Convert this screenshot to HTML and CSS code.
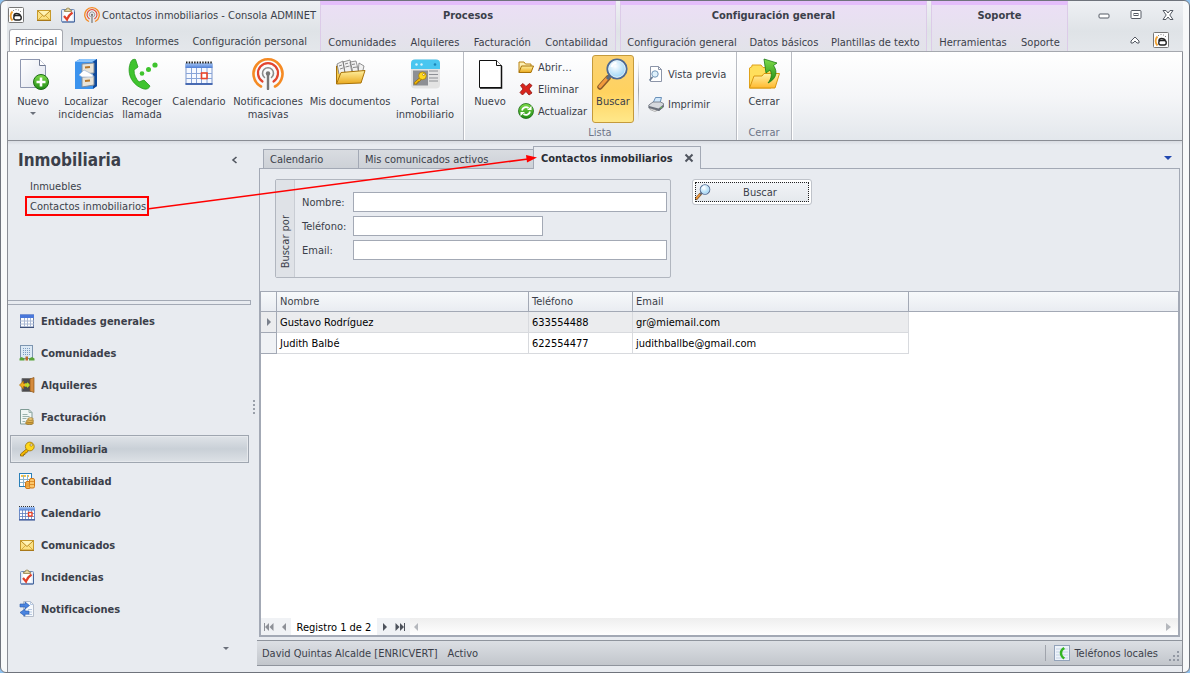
FILE: index.html
```html
<!DOCTYPE html>
<html lang="es">
<head>
  <meta charset="UTF-8">
  <title>Contactos inmobiliarios - Consola ADMINET</title>
  <meta name="viewport" content="width=device-width,initial-scale=1">
  <link rel="stylesheet" href="styles.css">
</head>
<body>
<!-- iconos compartidos -->
<svg class="defs" width="0" height="0" aria-hidden="true">
  <defs>
    <linearGradient id="g-gold" x1="0" y1="0" x2="0" y2="1"><stop offset="0" stop-color="#fff0a0"/><stop offset="1" stop-color="#e9a81c"/></linearGradient>
    <linearGradient id="g-yellow" x1="0" y1="0" x2="0" y2="1"><stop offset="0" stop-color="#fff2a6"/><stop offset="1" stop-color="#ffb92e"/></linearGradient>
    <linearGradient id="g-page" x1="0" y1="0" x2="1" y2="1"><stop offset="0" stop-color="#fff"/><stop offset="1" stop-color="#dfe3ee"/></linearGradient>
    <linearGradient id="g-green" x1="0" y1="0" x2="0" y2="1"><stop offset="0" stop-color="#7fdc4a"/><stop offset="1" stop-color="#1e8a14"/></linearGradient>
    <linearGradient id="g-blue" x1="0" y1="0" x2="0" y2="1"><stop offset="0" stop-color="#a9c8f6"/><stop offset="1" stop-color="#4f7fd6"/></linearGradient>
    <radialGradient id="g-lens" cx=".4" cy=".35" r=".7"><stop offset="0" stop-color="#fff"/><stop offset="1" stop-color="#8fd0f5"/></radialGradient>
  </defs>
  <symbol id="i-logo" viewBox="0 0 16 16">
    <rect x=".5" y=".5" width="15" height="15" rx="1" fill="#fdfdfd" stroke="#777"/>
    <path d="M4.500 4.500C2 7 2 11 4.500 13.500" fill="none" stroke="#f0a030" stroke-width="1.800"/>
    <path d="M5 3.500h1M7.500 2.500h1M10 3h1M12 4.500h1" stroke="#888"/>
    <path d="M6 9c0-2 1-2.500 2.500-2.500s3 .5 4 2" fill="none" stroke="#222" stroke-width="1.500"/>
    <rect x="5.800" y="8.500" width="7.400" height="4.500" rx="2" fill="#fff" stroke="#222" stroke-width="1.400"/>
  </symbol>
  <symbol id="i-mail" viewBox="0 0 16 16">
    <rect x="1.500" y="3.500" width="13" height="9.500" fill="#fbe184" stroke="#c79a2b"/>
    <path d="M2 13l5-5M14 13L9 8" stroke="#d9ad3c" fill="none"/>
    <path d="M2 4l6 5.500L14 4" fill="#fff3b5" stroke="#b98a22"/>
    <path d="M1 13.500h14" stroke="#a8781a"/>
  </symbol>
  <symbol id="i-clip" viewBox="0 0 16 16">
    <rect x="1.500" y="2.500" width="13" height="12.500" rx="1" fill="#dfe8f6" stroke="#6f8dbd"/>
    <path d="M2 15h12.500V5" fill="none" stroke="#45659c"/>
    <rect x="3.500" y="4.500" width="9" height="9" fill="#fff"/>
    <path d="M4.500 4.500V3H6a2 2 0 0 1 4 0h1.500v1.500z" fill="#e5d5a0" stroke="#93804a" stroke-width=".8"/>
    <path d="M4 9L7 12.500c1-3 2.500-5 5.500-7" fill="none" stroke="#e0402a" stroke-width="2.200"/>
  </symbol>
  <symbol id="i-antenna" viewBox="0 0 32 32">
    <g fill="none" stroke-linecap="round">
      <path d="M9 28.500a14.500 14.500 0 1 1 14 0" stroke="#f58a23" stroke-width="2.600"/>
      <path d="M10.500 23.500a10 10 0 1 1 11 0" stroke="#e2452f" stroke-width="2.200"/>
      <path d="M12.500 19.500a5.500 5.500 0 1 1 7 0" stroke="#8b8b8b" stroke-width="1.600"/>
      <path d="M16 16v15" stroke="#777" stroke-width="2.400"/>
    </g>
    <circle cx="16" cy="15.500" r="2.200" fill="#777"/>
  </symbol>
  <symbol id="i-calendar" viewBox="0 0 32 32">
    <rect x="3" y="6" width="26" height="20" fill="#f6f9ff" stroke="#7d98cc"/>
    <rect x="2.500" y="5" width="27" height="5" fill="url(#g-blue)"/>
    <path d="M3 4.500h27" stroke="#222" stroke-width="2" stroke-dasharray="1.500 1.200"/>
    <path d="M3 15.500h26M3 20.500h26M8.500 10v16M13.500 10v16M18.500 10v16M24 10v16" stroke="#88a4d8"/>
    <path d="M2.500 26h27" stroke="#3d60ad" stroke-width="1.800"/>
    <rect x="18.500" y="15" width="5.500" height="5.500" fill="#fff" stroke="#e8432a" stroke-width="1.600"/>
  </symbol>
  <symbol id="i-calendar-s" viewBox="0 0 16 16">
    <rect x=".5" y="2.500" width="15" height="12" fill="#fff" stroke="#6d8ac4"/>
    <rect y="2" width="16" height="3.500" fill="url(#g-blue)"/>
    <path d="M0 1.500h16" stroke="#333" stroke-dasharray="1 1"/>
    <path d="M1 8.500h14M1 11.500h14M3.500 5v9M6.500 5v9M9.500 5v9M12.500 5v9" stroke="#5f7fbd" stroke-width=".8"/>
    <path d="M0 15h16" stroke="#24428a"/>
    <rect x="9.500" y="7.500" width="3.500" height="3.500" fill="#fff" stroke="#e8432a" stroke-width="1.400"/>
  </symbol>
  <symbol id="i-lens" viewBox="0 0 32 32">
    <path d="M3 29l8-9" stroke="#8a5a2b" stroke-width="5.500" stroke-linecap="round"/>
    <path d="M3 28.500l7-8" stroke="#f29a3c" stroke-width="3.200" stroke-linecap="round"/>
    <path d="M10 21l3-3.500" stroke="#5c6b80" stroke-width="3"/>
    <circle cx="20" cy="11" r="9.500" fill="url(#g-lens)" stroke="#4e6a93" stroke-width="2.200"/>
    <circle cx="20" cy="11" r="8.300" fill="none" stroke="#e3f3fd" stroke-width="1"/>
    <path d="M14.500 9a6.500 6.500 0 0 1 5-4.500" stroke="#fff" stroke-width="2" fill="none"/>
  </symbol>
  <symbol id="i-key" viewBox="0 0 16 16">
    <path d="M8 7.500L1.500 13v2h3v-1.500H6V12h1.500L9.500 9.500z" fill="#f5b800" stroke="#8c6508" stroke-width=".8"/>
    <circle cx="10.800" cy="5.500" r="4.400" fill="#ffd81c" stroke="#9c7208" stroke-width=".8"/>
    <circle cx="12.200" cy="4" r="1.200" fill="#fff" stroke="#8c6508" stroke-width=".7"/>
  </symbol>
  <symbol id="i-folder" viewBox="0 0 16 16">
    <path d="M1 13.500V3h5l1.500 2H13v2" fill="#fdf0b4" stroke="#b98212"/>
    <path d="M1 13.500L3.500 7H15.500l-2.500 6.500z" fill="url(#g-gold)" stroke="#a87208"/>
  </symbol>
</svg>

<div class="window">
  <header class="titlebar">
    <div class="main-head">
      <div class="quick">
        <button class="icon-btn" aria-label="Menú"><svg width="16" height="16"><use href="#i-logo"/></svg></button>
        <span class="quick-sep"></span>
        <button class="icon-btn" aria-label="Comunicados"><svg width="16" height="16"><use href="#i-mail"/></svg></button>
        <button class="icon-btn" aria-label="Incidencias"><svg width="16" height="16"><use href="#i-clip"/></svg></button>
        <button class="icon-btn" aria-label="Notificaciones"><svg width="16" height="16"><use href="#i-antenna"/></svg></button>
        <span class="app-title">Contactos inmobiliarios - Consola ADMINET</span>
      </div>
      <nav class="tabs">
        <button class="tab active">Principal</button>
        <button class="tab">Impuestos</button>
        <button class="tab">Informes</button>
        <button class="tab">Configuración personal</button>
      </nav>
    </div>
    <div class="context">
      <div class="context-title">Procesos</div>
      <nav class="tabs">
        <button class="tab">Comunidades</button>
        <button class="tab">Alquileres</button>
        <button class="tab">Facturación</button>
        <button class="tab">Contabilidad</button>
      </nav>
    </div>
    <div class="context">
      <div class="context-title">Configuración general</div>
      <nav class="tabs">
        <button class="tab">Configuración general</button>
        <button class="tab">Datos básicos</button>
        <button class="tab">Plantillas de texto</button>
      </nav>
    </div>
    <div class="context">
      <div class="context-title">Soporte</div>
      <nav class="tabs">
        <button class="tab">Herramientas</button>
        <button class="tab">Soporte</button>
      </nav>
    </div>
    <div class="win-tools">
      <div class="win-row">
        <button class="icon-btn" aria-label="Minimizar"><svg width="12" height="12"><rect x="1" y="5" width="10" height="4" rx="1" fill="#fff" stroke="#555a64"/></svg></button>
        <button class="icon-btn" aria-label="Maximizar"><svg width="12" height="12"><rect x="1" y="1.500" width="10" height="8" rx="1" fill="#fff" stroke="#555a64"/><rect x="4" y="4.500" width="4" height="2" fill="#fff" stroke="#555a64"/></svg></button>
        <button class="icon-btn" aria-label="Cerrar ventana"><svg width="12" height="12"><path d="M1 1.500h3L6 4l2-2.500h3L7.800 6 11 10.500H8L6 8l-2 2.500H1L4.200 6z" fill="#fff" stroke="#555a64"/></svg></button>
      </div>
      <div class="win-row win-row-low">
        <button class="icon-btn" aria-label="Contraer cinta"><svg width="10" height="8"><path d="M1 5l4-4 4 4v2H7L5 5 3 7H1z" fill="#fff" stroke="#555a64"/></svg></button>
        <button class="icon-btn" aria-label="Acerca de"><svg width="16" height="16"><use href="#i-logo"/></svg></button>
      </div>
    </div>
  </header>

  <!-- cinta de opciones -->
  <section class="ribbon">
    <div class="group">
      <div class="big-grid">
        <button class="big">
          <svg width="32" height="32"><path d="M3.500 1.500h19l6 6v22h-25z" fill="url(#g-page)" stroke="#8e97b0"/><path d="M22.500 1.500v6h6" fill="#fff" stroke="#6f7890"/><circle cx="24" cy="24" r="7.500" fill="url(#g-green)" stroke="#1d6b16"/><path d="M24 19.500v9M19.500 24h9" stroke="#fff" stroke-width="2.600"/></svg>
          <span>Nuevo</span><i class="caret"></i>
        </button>
        <button class="big">
          <svg width="32" height="32"><path d="M5 4l5-3h17v27l-5 3H5z" fill="#1f6fd0"/><path d="M5 4l5-3h17l-5 3z" fill="#8cc4fa"/><path d="M23 4l4-3v27l-4 3z" fill="#0f4a9c"/><path d="M5 4h18v27H5z" fill="#3b93ee"/><path d="M12 6l12-1v10l-12 1zM12 19l12-1v9l-12 2z" fill="#e9e4d8" stroke="#7d8a9c"/><path d="M15 9.500l5-.5M15 23l5-.5" stroke="#b5762a" stroke-width="2"/><path d="M9 17l5-5 4 2 5 3v2H12z" fill="#fff" stroke="#9db6d4" stroke-width=".7"/></svg>
          <span>Localizar<br>incidencias</span>
        </button>
        <button class="big">
          <svg width="32" height="32"><path d="M5 3.500C0 14 5 27 18 31c3 .5 5-.5 6-3l-6-6-5 2c-3-3-5-7-5-12l4-3L9.500 1.500C8 1 6 1.500 5 3.500z" fill="#3fc42e" stroke="#2a9a1e" stroke-width=".8"/><circle cx="16" cy="15.500" r="2.300" fill="#3fc42e"/><circle cx="22.500" cy="11.500" r="2.500" fill="#3fc42e"/><circle cx="29" cy="7" r="2.600" fill="#3fc42e"/></svg>
          <span>Recoger<br>llamada</span>
        </button>
        <button class="big"><svg width="32" height="32"><use href="#i-calendar"/></svg><span>Calendario</span></button>
        <button class="big"><svg width="32" height="32"><use href="#i-antenna"/></svg><span>Notificaciones<br>masivas</span></button>
        <button class="big">
          <svg width="32" height="32"><path d="M2.500 26V8h5l2 3h14v6" fill="#f3c94c" stroke="#a87208"/><path d="M5 16L3 6l6-3 2 12M11 15L9 4l7-2 3 13M18 15L16 4l6-1 3 12M24 15l1-10 5 3-2 8" fill="#f1f1f1" stroke="#777" stroke-width=".8"/><path d="M11 6l3-.8M11.500 9l4-1M18 6.500l3-.5M19 9.500l4-.5M5 8l3-1M6 11l3-1" stroke="#888"/><path d="M2.500 26L7 14.500l24-2L27 25z" fill="url(#g-gold)" stroke="#a87208"/></svg>
          <span>Mis documentos</span>
        </button>
        <button class="big">
          <svg width="32" height="32"><rect x="2" y="1.500" width="29" height="29" rx="4" fill="#e3e3e3"/><path d="M2 11V5.500a4 4 0 0 1 4-4h21a4 4 0 0 1 4 4V11z" fill="#49c6f0"/><g fill="#d8f5ff"><circle cx="7.500" cy="6.500" r="1.200"/><circle cx="12.500" cy="6.500" r="1.200"/></g><circle cx="26" cy="6.500" r="1.300" fill="#1d86b8"/><rect x="4" y="12.500" width="15" height="15" fill="#8d8f94"/><path d="M20 13h9M20 16.500h9M20 20h9M20 23h9" stroke="#8d8f94" stroke-width="1.200"/><svg x="4" y="13" width="14" height="14"><use href="#i-key"/></svg></svg>
          <span>Portal<br>inmobiliario</span>
        </button>
      </div>
    </div>
    <div class="group">
      <div class="group-body">
        <button class="big big-new">
          <svg width="32" height="32"><path d="M5.500 2.500h17l5 5v22h-22z" fill="#fff" stroke="#111"/><path d="M22.500 2.500v5h5" fill="#fff" stroke="#111"/><path d="M27.500 8v22H6" fill="none" stroke="#111" stroke-width="1.500"/></svg>
          <span>Nuevo</span>
        </button>
        <div class="small-col">
          <button class="small"><svg width="16" height="16"><use href="#i-folder"/></svg>Abrir…</button>
          <button class="small"><svg width="16" height="16" viewBox="0 0 16 16"><path d="M2.500 4.500L5 2.500 8 5.500 11.500 2.500 14 4.500 11 8l3 4-3 2-3-3.500L4.500 14 2 11.500 5 8z" fill="#d9251d" stroke="#8f1410" stroke-width=".8"/></svg>Eliminar</button>
          <button class="small"><svg width="16" height="16" viewBox="0 0 16 16"><circle cx="8" cy="8" r="7.500" fill="url(#g-green)" stroke="#1d6b16" stroke-width=".8"/><path d="M4 7.500a4 4 0 0 1 6.500-2.500M12 8.500a4 4 0 0 1-6.500 2.500" fill="none" stroke="#fff" stroke-width="1.800"/><path d="M9 7h4.500V3zM7 9H2.500v4z" fill="#fff"/></svg>Actualizar</button>
        </div>
        <button class="big pressed"><svg width="32" height="32"><use href="#i-lens"/></svg><span>Buscar</span></button>
        <span class="group-sep"></span>
        <div class="small-col small-col-two">
          <button class="small"><svg width="16" height="16" viewBox="0 0 16 16"><path d="M2.500.5h8l3 3v12h-11z" fill="#fff" stroke="#8c95a8"/><path d="M10.500.5v3h3" fill="none" stroke="#8c95a8"/><path d="M1.500 14.500l3-3.500" stroke="#6c7f98" stroke-width="1.800"/><circle cx="7" cy="8" r="3.200" fill="#dff1fb" stroke="#7396b8"/></svg>Vista previa</button>
          <button class="small"><svg width="16" height="16" viewBox="0 0 16 16"><path d="M5 7l2.500-5.500h6L12 7z" fill="#cfe6fa" stroke="#4b78a8" stroke-width=".8"/><path d="M.8 9l4.200-3h7.500l3 1.500v3.500L11 14.500.8 12z" fill="#d6d9de" stroke="#6a707b" stroke-width=".8"/><path d="M1 10l9.500 2.500 5-4v2.500L11 15 1 12z" fill="#6a707b"/><path d="M2 12.500l7 2-2 1-5-2z" fill="#fff" stroke="#888" stroke-width=".6"/><circle cx="13" cy="11.500" r=".8" fill="#6fd04a"/></svg>Imprimir</button>
        </div>
      </div>
      <div class="caption">Lista</div>
    </div>
    <div class="group">
      <div class="group-body">
        <button class="big big-close">
          <svg width="32" height="32"><path d="M1.500 30V10l2.500-1.500V7h9l2 2.500H23V30z" fill="#ffdf5c" stroke="#e0a21a"/><path d="M1.500 30L6 18h8l2-2.500h15.500L27 30z" fill="url(#g-yellow)" stroke="#d8960f"/><path d="M20 25c4-5 4-10 2-13l-4 3-2-14 13 4-3.500 2.500c5 7 2 14-5.500 17.500z" fill="url(#g-green)" stroke="#1d7a16" stroke-width=".8"/></svg>
          <span>Cerrar</span>
        </button>
      </div>
      <div class="caption">Cerrar</div>
    </div>
  </section>

  <div class="workspace">
    <aside class="sidebar">
      <div class="side-head">
        <h1>Inmobiliaria</h1>
        <button class="icon-btn" aria-label="Contraer panel"><svg width="8" height="8"><path d="M5.500 1L2 4l3.500 3" fill="none" stroke="#50555f" stroke-width="1.600"/></svg></button>
      </div>
      <ul class="links">
        <li><a href="#">Inmuebles</a></li>
        <li><a href="#" class="marked">Contactos inmobiliarios</a></li>
      </ul>
      <div class="side-split"></div>
      <nav class="modules">
        <a href="#"><svg width="16" height="16" viewBox="0 0 16 16"><rect x="1.500" y="2" width="13" height="12" fill="#fff" stroke="#6c80a8"/><rect x="1" y="1.500" width="14" height="3.500" fill="#4a78da"/><path d="M1 8h14M1 11h14M5.500 5v9M8.500 5v9M11.500 5v9" stroke="#a9b8d3"/><path d="M1 14.500h14" stroke="#3c4f78"/></svg>Entidades generales</a>
        <a href="#"><svg width="16" height="16" viewBox="0 0 16 16"><rect x="1.500" y=".5" width="12" height="13" fill="#dce9f5" stroke="#7d95b0"/><path d="M4 3.500h8M4 5.500h8M4 7.500h8M4 9.500h8" stroke="#7d9cc0" stroke-dasharray="1 1"/><path d="M6.500 11.500H9v4H6.500z" fill="#b9692c"/><path d="M.5 15.500v-2l2-1.500 3 1.500v2zM10 15.500v-2l3-1.500 2.500 1.500v2z" fill="#59a33a"/></svg>Comunidades</a>
        <a href="#"><svg width="16" height="16" viewBox="0 0 16 16"><path d="M3 1.500h9v13H3z" fill="#4b4b50" stroke="#777"/><path d="M11 2l4-1.500v15L11 14z" fill="#d58b3d" stroke="#8d5416" stroke-width=".7"/><path d="M.5 8l4-4v2.500h5.500v3H4.500V12z" fill="#f2ae1e" stroke="#a86c08" stroke-width=".7"/><path d="M6 6.500h2V5l3 3-3 3V9.500H6z" fill="#b7dc30"/></svg>Alquileres</a>
        <a href="#"><svg width="16" height="16" viewBox="0 0 16 16"><path d="M1.500.5h8.500l3 3v11.500H1.500z" fill="#f1f7f5" stroke="#7f9b95"/><path d="M10 .5v3h3M3.500 5.500h5M3.500 7.500h7M3.500 9.500h4M3.500 12.500h3" fill="none" stroke="#9bb3ad"/><ellipse cx="10.500" cy="14" rx="4" ry="1.600" fill="#d3a13a" stroke="#8a6118" stroke-width=".6"/><ellipse cx="11" cy="12" rx="3.600" ry="1.500" fill="#e7bc5a" stroke="#8a6118" stroke-width=".6"/><ellipse cx="11.500" cy="10" rx="2.800" ry="1.300" fill="#f0d080" stroke="#8a6118" stroke-width=".6"/></svg>Facturación</a>
        <a href="#" class="selected"><svg width="16" height="16"><use href="#i-key"/></svg>Inmobiliaria</a>
        <a href="#"><svg width="16" height="16" viewBox="0 0 16 16"><rect x=".5" y=".5" width="12" height="13" fill="#fff" stroke="#2a7fb8"/><path d="M2 3h9" stroke="#f4c34a" stroke-width="2" stroke-dasharray="2 1"/><path d="M1 6.500h11M1 9.500h11M4.500 2v11M8.500 2v11" stroke="#8db4cc"/><rect x="6.500" y="8.500" width="5" height="7" rx="1.500" fill="#f8b650" stroke="#cf7718"/><rect x="10.500" y="5.500" width="5" height="9.500" rx="1.500" fill="#fbc76c" stroke="#cf7718"/><path d="M11 8.500h4M11 11.500h4M7 11h4M7 13h4" stroke="#e0902c"/></svg>Contabilidad</a>
        <a href="#"><svg width="16" height="16"><use href="#i-calendar-s"/></svg>Calendario</a>
        <a href="#"><svg width="16" height="16"><use href="#i-mail"/></svg>Comunicados</a>
        <a href="#"><svg width="16" height="16"><use href="#i-clip"/></svg>Incidencias</a>
        <a href="#"><svg width="16" height="16" viewBox="0 0 16 16"><path d="M4.500.5h7l3 3v12h-10z" fill="#f6f9fd" stroke="#b5bdca"/><path d="M11.500.5v3h3M9 8.500h4M10 11h3M10 13.500h3" fill="none" stroke="#b7c9e2"/><path d="M1 3h5V1L10.500 4.500 6 8V6H1z" fill="#4a84e0" stroke="#2557a8" stroke-width=".6"/><path d="M10 10H6V8L1 11.500 6 15.200v-2h4z" fill="#4a84e0" stroke="#2557a8" stroke-width=".6"/></svg>Notificaciones</a>
      </nav>
      <button class="side-more" aria-label="Más módulos"><i class="caret"></i></button>
    </aside>
    <div class="grip"><i></i><i></i><i></i><i></i></div>

    <main class="content">
      <div class="doc-tabs">
        <button class="doc-tab tab-cal">Calendario</button>
        <button class="doc-tab tab-com">Mis comunicados activos</button>
        <div class="doc-tab current">
          <span>Contactos inmobiliarios</span>
          <button class="icon-btn" aria-label="Cerrar pestaña"><svg width="10" height="10"><path d="M1.500 1.500l7 7M8.500 1.500l-7 7" stroke="#50555f" stroke-width="2"/></svg></button>
        </div>
        <button class="tab-list" aria-label="Lista de pestañas"></button>
      </div>
      <div class="doc">
        <form class="search" onsubmit="return false">
          <fieldset class="search-box">
            <div class="search-side"><span>Buscar por</span></div>
            <div class="fields">
              <label for="nombre">Nombre:</label><input id="nombre" type="text">
              <label for="telefono">Teléfono:</label><input id="telefono" type="text" class="short">
              <label for="email">Email:</label><input id="email" type="text">
            </div>
          </fieldset>
          <button class="search-btn"><svg width="16" height="16"><use href="#i-lens"/></svg><span>Buscar</span></button>
        </form>
        <div class="grid">
          <div class="grid-head">
            <table>
              <colgroup><col class="c-ind"><col class="c-nom"><col class="c-tel"><col class="c-mail"><col></colgroup>
              <thead>
                <tr><th></th><th>Nombre</th><th>Teléfono</th><th>Email</th><th class="rest"></th></tr>
              </thead>
              <tbody>
                <tr class="focus"><td class="ind"><i class="row-arrow"></i></td><td>Gustavo Rodríguez</td><td>633554488</td><td>gr@miemail.com</td><td class="rest"></td></tr>
                <tr><td class="ind"></td><td>Judith Balbé</td><td>622554477</td><td>judithballbe@gmail.com</td><td class="rest"></td></tr>
              </tbody>
            </table>
          </div>
          <div class="pager">
            <button class="icon-btn" aria-label="Primero"><svg width="12" height="10"><path d="M1.500 1v8" stroke="#8d9097"/><path d="M6 1v8L2 5zM10.500 1v8l-4-4z" fill="#8d9097"/></svg></button>
            <button class="icon-btn" aria-label="Anterior"><svg width="12" height="10"><path d="M8 1v8L4 5z" fill="#8d9097"/></svg></button>
            <span class="pager-text">Registro 1 de 2</span>
            <button class="icon-btn" aria-label="Siguiente"><svg width="12" height="10"><path d="M4 1v8l4-4z" fill="#4d525c"/></svg></button>
            <button class="icon-btn" aria-label="Último"><svg width="12" height="10"><path d="M10.500 1v8" stroke="#4d525c"/><path d="M6 1v8l4-4zM1.500 1v8l4-4z" fill="#4d525c"/></svg></button>
            <div class="hscroll">
              <svg width="8" height="10"><path d="M6 1v8L2 5z" fill="#b5b8bd"/></svg>
              <svg width="8" height="10"><path d="M1 1v8l5-4z" fill="#b5b8bd"/></svg>
            </div>
          </div>
        </div>
      </div>
      <footer class="status">
        <span>David Quintas Alcalde [ENRICVERT]</span>
        <span>Activo</span>
        <div class="status-right">
          <svg width="16" height="16"><rect x=".5" y=".5" width="15" height="15" fill="#eef3fa" stroke="#93a3ba"/><path d="M2 4h12M2 7h12M2 10h12M2 13h12" stroke="#c5d3e6"/><path d="M9.500 2C4.500 5 4.500 11 9.500 14.500L11 12.500 9 11C8 9 8 7 9 5.500L11 4z" fill="#35b522"/></svg>
          <span>Teléfonos locales</span>
        </div>
        <svg class="resize" width="12" height="12"><path d="M9 1h2v2H9zM5 5h2v2H5zM9 5h2v2H9zM1 9h2v2H1zM5 9h2v2H5zM9 9h2v2H9z" fill="#9298a3"/></svg>
      </footer>
    </main>
  </div>

  <svg class="pointer" width="392" height="60" aria-hidden="true"><path d="M1 58L382 8" stroke="#f00" stroke-width="1.500"/><path d="M380 4l11 2.500-10 5z" fill="#f00"/></svg>
</div>
</body>
</html>
```
FILE: styles.css
```css
*{box-sizing:border-box}
body{margin:0;background:#8fc1ee;font-family:"DejaVu Sans Condensed","DejaVu Sans",sans-serif;font-size:11px;line-height:13px;color:#3b3f4a}
button,input{font:inherit;color:inherit}
button{padding:0;border:0;background:none;white-space:nowrap}
a{color:inherit;text-decoration:none}
svg{display:block;flex:none}
.defs{position:absolute}

.window{position:relative;display:flex;flex-direction:column;min-height:100vh;padding:0 6px;border:1px solid #6f737c;border-radius:6px;background:#f8f9fa}
.icon-btn{display:flex;align-items:center;justify-content:center}
.caret{display:block;width:0;border:3px solid transparent;border-top-color:#6b707b;border-bottom:0}

/* barra de título */
.titlebar{display:flex;gap:4px;height:51px;border-bottom:1px solid #a5a8af;background:linear-gradient(#eef0f4,#dfe3e7 60%,#e4e7eb)}
.main-head{width:309px;display:flex;flex-direction:column}
.quick{display:flex;align-items:center;height:29px;padding-left:1px}
.quick .icon-btn + .icon-btn{margin-left:8px}
.quick-sep{width:1px;height:16px;margin:0 6px;background:#a9adb5}
.app-title{margin-left:2px;white-space:nowrap}
.tabs{display:flex;justify-content:space-around;height:22px}
.main-head .tabs{justify-content:space-between;padding:0 3px 0 2px}
.tab{padding:2px 5px 0;border:1px solid transparent;border-bottom:0}
.tab.active{border-color:#a5a8af;border-radius:3px 3px 0 0;background:#fff}
.context{border-top:4px solid #e4bdfb;border-left:1px solid #dccbe8;border-right:1px solid #dccbe8;background:linear-gradient(#ebdff5,#e2e3e9)}
.context:nth-child(2){width:296px}
.context:nth-child(3){width:307px}
.context:nth-child(4){width:137px}
.context-title{height:25px;line-height:21px;text-align:center;font-weight:bold}
.win-tools{flex:1;display:flex;flex-direction:column}
.win-row{display:flex;align-items:center;justify-content:flex-end;gap:20px;height:29px;padding-right:9px}
.win-row-low{height:22px;gap:13px;padding-right:14px}

/* cinta */
.ribbon{display:flex;height:89px;border:1px solid #8a8d95;border-top:0;background:linear-gradient(#fff,#f5f6f8 50%,#e3e7ec)}
.group{display:flex;flex-direction:column;border-right:1px solid #b9bcc3;box-shadow:1px 0 #fff}
.big-grid{display:grid;grid-template-columns:48px 58px 54px 60px 78px 86px 64px;padding:3px 6px 0 1px}
.group-body{display:flex;height:73px;padding-top:3px}
.big{display:flex;flex-direction:column;align-items:center;padding-top:3px}
.big svg{margin-bottom:5px}
.big .caret{margin-top:4px}
.big-new{width:48px;margin-left:2px}
.big-close{width:54px}
.pressed{width:42px;height:68px;border:1px solid #c49a3c;border-radius:3px;padding-top:2px;background:linear-gradient(#fbd273,#ffd25f 55%,#ffe88a)}
.small-col{display:flex;flex-direction:column;width:78px;padding:1px 0 0 4px}
.small{display:flex;align-items:center;gap:4px;height:22px}
.small-col-two{width:97px;padding:4px 0 0 9px}
.small-col-two .small{height:30px}
.group-sep{width:1px;height:62px;margin:4px 0 0 4px;background:linear-gradient(transparent,#9fa3ab,transparent)}
.caption{padding-top:1px;text-align:center;color:#6d7488}

/* zona de trabajo */
.workspace{flex:1;display:flex;border-left:1px solid #8a8d95;border-right:1px solid #8a8d95;background:linear-gradient(#d9dce2,#e8ebf0 4px)}
.sidebar{width:243px;display:flex;flex-direction:column}
.side-head{display:flex;align-items:center;justify-content:space-between;height:35px;padding:3px 12px 0 10px}
.side-head h1{margin:0;font-size:17px;line-height:22px}
.links{height:124px;margin:0;padding:0 17px;list-style:none}
.links li{display:flex;height:20px}
.links a{display:flex;align-items:center;padding:0 5px}
.links .marked{border:2px solid #f00;padding:0 1px 0 3px}
.side-split{height:5px;border:1px solid #a3a9b5;border-left:0}
.modules{padding:0 2px}
.modules a{display:flex;align-items:center;gap:6px;height:28px;margin:2px 0 4px;padding:0 8px;border:1px solid transparent;font-weight:bold}
.modules .selected{border-color:#9fa6b0;background:linear-gradient(#dfe3e8,#c9d0d7 50%,#dde1e6);box-shadow:inset 0 0 0 1px #e6e9ed}
.side-more{align-self:flex-end;margin:17px 19px 0 0;padding:3px}
.grip{width:6px;display:flex;flex-direction:column;align-items:center;justify-content:center;gap:2px}
.grip i{width:2px;height:2px;background:#9aa0aa}

.content{flex:1;min-width:0;display:flex;flex-direction:column}
.doc-tabs{position:relative;display:flex;align-items:flex-end;height:28px;padding-left:6px;margin:0 2px -1px 0}
.doc-tab{height:20px;padding:0 6px;border:1px solid #a3a9b5;background:linear-gradient(#d9dce1,#cdd1d7);text-align:left}
.tab-cal{width:96px}
.tab-com{width:175px;border-left:0}
.doc-tab.current{display:flex;align-items:center;gap:11px;height:23px;padding:0 6px 0 7px;margin-left:-1px;border-bottom:0;background:#e8ebf0;font-weight:bold;color:#2b2e36}
.tab-list{width:0;margin:0 8px 9px auto;border:4px solid transparent;border-top-color:#2148b0;border-bottom:0}
.doc{flex:1;display:flex;flex-direction:column;margin:0 2px 3px;border:1px solid #a3a9b5}
.search{display:flex;align-items:flex-start;gap:21px;padding:10px 15px 13px}
.search-box{display:flex;width:396px;height:99px;margin:0;padding:0;border:1px solid #b1b6bf;border-radius:2px}
.search-side{width:19px;display:flex;align-items:flex-end;justify-content:center;padding-bottom:9px;border-right:1px solid #c9cdd4;background:#dfe2e7}
.search-side span{writing-mode:vertical-rl;transform:rotate(180deg)}
.fields{flex:1;display:grid;grid-template-columns:51px 1fr;grid-auto-rows:20px;gap:4px 0;padding:12px 3px 0 7px;align-items:center}
.fields input{width:100%;height:20px;padding:0 3px;border:1px solid #a3a9b5;background:#fff}
.fields .short{width:190px}
.search-btn{display:flex;align-items:center;width:120px;height:26px;padding:0 2px;border:1px solid #bfc3ca;border-radius:3px;background:linear-gradient(#f3f5f8,#e3e7ec);outline:1px dotted #222;outline-offset:-4px;box-shadow:inset 0 0 0 2px #fff}
.search-btn span{flex:1;text-align:center}

/* tabla de contactos */
.grid{flex:1;display:flex;flex-direction:column;border:1px solid #a3a9b5;background:#fff}
.grid-head{flex:1}
table{width:100%;border-collapse:separate;border-spacing:0;table-layout:fixed}
.c-ind{width:16px}
.c-nom{width:252px}
.c-tel{width:104px}
.c-mail{width:276px}
th,td{height:21px;padding:0 3px;border-right:1px solid #d8dade;border-bottom:1px solid #d8dade;text-align:left}
th{height:20px;border-color:#a3a9b5;background:linear-gradient(#f7f9fb,#e9ecf1);font-weight:normal}
td{color:#000}
th.rest{border-right:0}
td.rest{border:0;background:#fff}
td.ind{border-color:#a3a9b5;background:#f0f2f5}
.focus td{background:#ebecee}
.focus td.rest{background:#fff}
.row-arrow{display:block;width:0;margin-left:3px;border:4px solid transparent;border-left-color:#7a808b;border-right:0}
.pager{display:flex;align-items:center;height:17px;background:#f0f2f5}
.pager .icon-btn{width:15px;height:17px;padding-top:1px}
.pager-text{width:86px;height:17px;line-height:19px;text-align:center;background:#fff;color:#000}
.hscroll{flex:1;display:flex;align-items:center;justify-content:space-between;height:17px;margin-left:3px;padding:1px 5px 0 2px;background:linear-gradient(#eee,#fff)}

.status{display:flex;align-items:center;gap:10px;height:26px;margin-bottom:6px;padding:0 2px 0 5px;border:1px solid #8f949d;border-width:1px 0;background:linear-gradient(#dcdfe4,#c2c6cc)}
.status-right{display:flex;align-items:center;gap:4px;margin-left:auto;padding-left:8px;border-left:1px solid #a0a4ac}
.resize{align-self:flex-end;margin-bottom:3px}
.pointer{position:absolute;left:145px;top:150px}
```
